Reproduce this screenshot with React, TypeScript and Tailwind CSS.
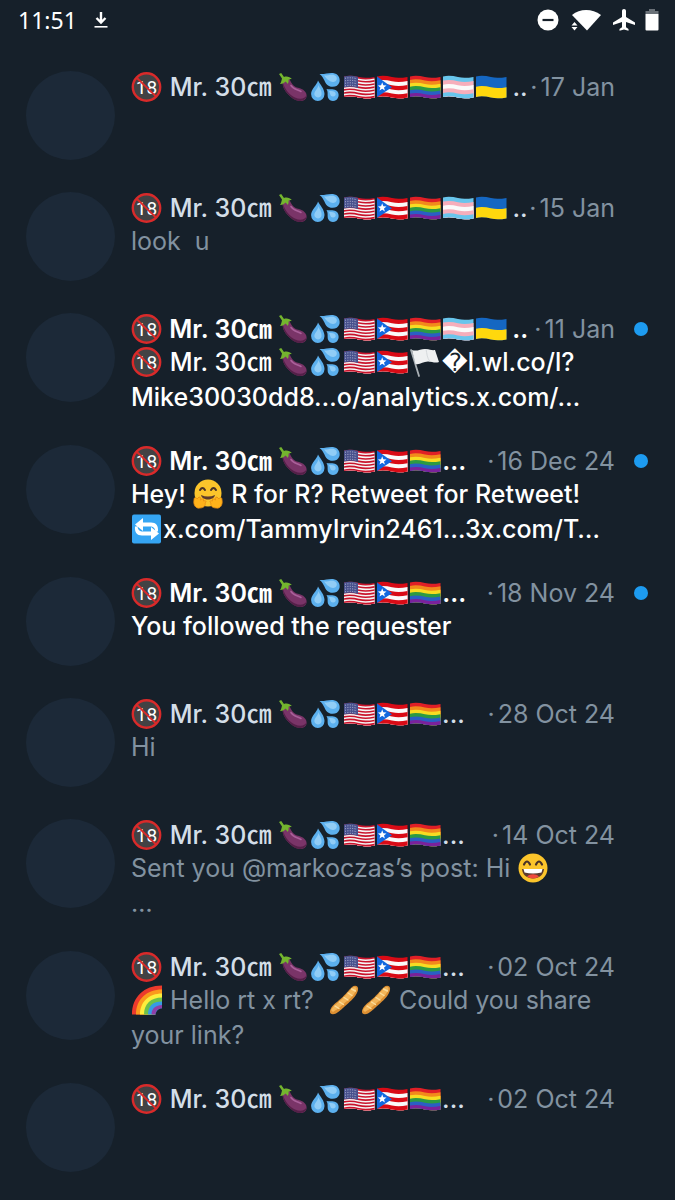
import type { ReactNode } from "react";

type Conversation = {
  name: string;
  date: string;
  lines?: string[];
  unread?: boolean;
};

const LONG_NAME = "🔞 Mr. 30㎝ 🍆💦🇺🇸🇵🇷🏳️‍🌈🏳️‍⚧️🇺🇦\u2009..";
const SHORT_NAME = "🔞 Mr. 30㎝ 🍆💦🇺🇸🇵🇷🏳️‍🌈...";

const conversations: Conversation[] = [
  { name: LONG_NAME, date: "17 Jan" },
  { name: LONG_NAME, date: "15 Jan", lines: ["look  u"] },
  {
    name: LONG_NAME,
    date: "11 Jan",
    unread: true,
    lines: ["🔞 Mr. 30㎝ 🍆💦🇺🇸🇵🇷🏳️�l.wl.co/l?", "Mike30030dd8…o/analytics.x.com/…"],
  },
  {
    name: SHORT_NAME,
    date: "16 Dec 24",
    unread: true,
    lines: ["Hey! 🤗 R for R? Retweet for Retweet!", "🔄x.com/TammyIrvin2461…3x.com/T…"],
  },
  { name: SHORT_NAME, date: "18 Nov 24", unread: true, lines: ["You followed the requester"] },
  { name: SHORT_NAME, date: "28 Oct 24", lines: ["Hi"] },
  { name: SHORT_NAME, date: "14 Oct 24", lines: ["Sent you @markoczas’s post: Hi 😄", "…"] },
  { name: SHORT_NAME, date: "02 Oct 24", lines: ["🌈 Hello rt x rt?  🥖🥖 Could you share", "your link?"] },
  { name: SHORT_NAME, date: "02 Oct 24" },
];

// Top edge of a waving flag band starting at height y
const wave = (y: number) => `M1 ${y} C6 ${y - 1.2} 11 ${y - 0.6} 16 ${y + 0.6} S26 ${y + 1.4} 31.5 ${y + 0.4}`;
// Bottom edge of the flag, drawn back from right to left
const hem = "L31.5 26.4 C26 27.4 21 27.6 16 26.6 C11 25.4 6 24.8 1 26 Z";

function Flag({ colors, children }: { colors: string[]; children?: ReactNode }) {
  const step = 20.5 / colors.length;
  return (
    <>
      {colors.map((color, i) => (
        <path key={i} d={`${wave(5.5 + i * step)} ${hem}`} fill={color} />
      ))}
      {children}
    </>
  );
}

const usStripes = Array.from({ length: 13 }, (_, i) => (i % 2 ? "#f5f5f5" : "#c9132b"));

const emojis: Record<string, ReactNode> = {
  "🔞": (
    <>
      <circle cx="15.500" cy="16" r="14" fill="#424244" />
      <text
        x="15.500"
        y="23"
        textAnchor="middle"
        fill="#fff"
        fontSize="19"
        fontWeight="400"
        fontFamily="Roboto, sans-serif"
      >
        18
      </text>
      <path d="M6 7 25 25.500" stroke="#d92a2a" strokeWidth="1.800" />
      <circle cx="15.500" cy="16" r="13.700" fill="none" stroke="#d92a2a" strokeWidth="2.400" />
    </>
  ),
  "🍆": (
    <>
      <path d="M5 9C3 15 8 22 13 26c5 4.500 14 6 15.500 0 1-5-3.500-8-8.500-9.200C14.500 15.500 13 11 11.500 8Z" fill="#7a3468" />
      <path d="M5 12c2 7 7 12 12 14.500 5 2.300 10 1.500 11.500-2.500-.2 7.500-9.500 7.500-15.500 2C8 21.500 4.500 17 5 12Z" fill="#542048" />
      <path d="M13 14.500c2 3.500 6 4 10 6" stroke="#a9609a" strokeWidth="1.600" strokeLinecap="round" fill="none" />
      <path
        d="M1 3 3.200 2 6 6c3-1 6 0 8 2.200-1.500-.2-2.500 0-3.500.5.300 1.500 0 3-.8 4.300-.8-1.500-1.500-2-2.200-2.500-1 1-2.500 2.500-5.500 2.500C3.500 11 3.500 9 4 7.500Z"
        fill="#74b52e"
      />
    </>
  ),
  "💦": (
    <>
      <path d="M8 9.500c2 4 6.500 8 6.500 13.500a6.700 6.900 0 0 1-13.400 0C1 18 7 14 8 9.500Z" fill="#5cb0ee" />
      <path d="M9.500 3c5 .5 9-1.500 13.500-1 5 .6 7.500 5 6.500 9-1.200 4.500-6.500 6-10.500 4-5-2.500-4-8-9.500-12Z" fill="#5cb0ee" />
      <path d="M16.500 18c4 .5 8-.5 10.500 2 2.600 2.600 2 7-.8 9-3 2-6.800.8-8-2-1.200-3 .3-6-1.700-9Z" fill="#5cb0ee" />
      <path d="M8.500 14c1.500 4 3.500 6 3 9.500-.6 3.500-5.500 4-7 .5C3.500 20.500 8 18 8.500 14Z" fill="#91cdf6" />
      <path d="M14 4.500c4 0 8-1.500 10.500-.3 2.800 1.300 3 4.500 1 6-3.500 2.300-8-1-11.500-5.700Z" fill="#91cdf6" />
      <path d="M19 20c3 .2 5.500 0 6.500 2 .8 2-.5 3.500-2.500 3.500-3 0-2.500-3-4-5.500Z" fill="#91cdf6" />
    </>
  ),
  "🇺🇸": (
    <Flag colors={usStripes}>
      <path d="M1 5.500C6 4.300 11 5 15 6V17C11 16 6 15.300 1 16.500Z" fill="#47508c" />
      <path
        d="M2 7.300q6-1.200 12 .5M2 9.800q6-1.200 12 .5M2 12.300q6-1.200 12 .5M2 14.800q6-1.200 12 .5"
        stroke="#c5c9e2"
        strokeWidth=".9"
        strokeDasharray="1 1.400"
        fill="none"
      />
    </Flag>
  ),
  "🇵🇷": (
    <Flag colors={["#d90b16", "#fafafa", "#d90b16", "#fafafa", "#d90b16"]}>
      <path d="M1 5.500 16 16.200 1 26Z" fill="#1268df" />
      <path d="m6.200 11.300 1.100 3 3.200.1-2.500 2 .9 3.100-2.700-1.800-2.700 1.800.9-3.100-2.500-2 3.200-.1Z" fill="#fff" />
    </Flag>
  ),
  "🏳️‍🌈": <Flag colors={["#e01f26", "#f28a1c", "#f7dc22", "#2c9a43", "#2a5fc4", "#7b219b"]} />,
  "🏳️‍⚧️": <Flag colors={["#68c5ec", "#f6aebb", "#fafafa", "#f6aebb", "#68c5ec"]} />,
  "🇺🇦": <Flag colors={["#1567c2", "#ffd80d"]} />,
  "🏳️": (
    <>
      <path d="M2 4 10 30" stroke="#a9b0b5" strokeWidth="1.800" strokeLinecap="round" />
      <path d="M3 4c5 2 9-1.500 14-1 4 .5 6 1.500 9 1L30 16c-4 1.500-7-.5-11-.5-5 0-8 3.500-12.500 2.500Z" fill="#eef0f1" />
      <path d="M17 3c1 5 1 9 4 12.500" stroke="#d5d9dc" strokeWidth="1" fill="none" />
    </>
  ),
  "🤗": (
    <>
      <circle cx="16" cy="15" r="13.500" fill="#fcc52b" />
      <path d="M8 12q2.500-4 5 0M19 12q2.500-4 5 0" stroke="#4a3228" strokeWidth="2" strokeLinecap="round" fill="none" />
      <path d="M9 17q7 3 14 0c-1 6-13 6-14 0Z" fill="#5d3b2d" />
      <path
        d="M2 22c0-3 2-3 3-1l2-2c2 0 2 2 1.500 3 2-2 4-1 3 1 3-1 3 1 1.500 2 1 2-1 5-5 5-4 1-7-3-6-8Z"
        fill="#ffb21a"
        stroke="#e58a13"
        strokeWidth=".8"
      />
      <path
        d="M30 22c0-3-2-3-3-1l-2-2c-2 0-2 2-1.500 3-2-2-4-1-3 1-3-1-3 1-1.500 2-1 2 1 5 5 5 4 1 7-3 6-8Z"
        fill="#ffb21a"
        stroke="#e58a13"
        strokeWidth=".8"
      />
    </>
  ),
  "🔄": (
    <>
      <rect x="1" y="1.500" width="29" height="29" rx="2" fill="#35a5f3" />
      <path
        d="M27 18.500c.5-6-2-9-7-9h-8V5L4 11.500l8 6.500v-4.500h7c3.500 0 5 1.500 5.500 5ZM4 13.500c-.5 6 2 9 7 9h9V27l8-6.500-8-6.500v4.500h-8c-3.500 0-5-1.500-5.500-5Z"
        fill="#fff"
      />
    </>
  ),
  "😄": (
    <>
      <circle cx="16" cy="16" r="14.500" fill="#fcc52b" />
      <path
        d="M7 12.500q3-6 6 0M19 12.500q3-6 6 0"
        stroke="#4a3228"
        strokeWidth="2.200"
        strokeLinecap="round"
        fill="none"
      />
      <path d="M5 17h22c-.5 6-5 9.500-11 9.500S5.500 23 5 17Z" fill="#5d3b2d" />
      <path d="M6.500 17h19l-1 3.500q-8.500 2-17 0Z" fill="#fff" />
      <path d="M10 24.500c3-3 9-3 12 0-3.500 2.600-8.500 2.600-12 0Z" fill="#ef4a3c" />
    </>
  ),
  "🌈": (
    <>
      <path d="M1 30.500C1 13 13 1.500 31 1.500v24.500c-3 0-4 1.500-4.500 4.500Z" fill="#ec3a2c" />
      <path d="M5 30.500C5 15 16 5.500 31 5.500v20.500c-3 0-4 1.500-4.500 4.500Z" fill="#fb9a1c" />
      <path d="M9 30.500C9 18 18 9.500 31 9.500v16.500c-3 0-4 1.500-4.500 4.500Z" fill="#fdee3c" />
      <path d="M13 30.500C13 20 20 13.500 31 13.500v12.500c-3 0-4 1.500-4.500 4.500Z" fill="#6cc04a" />
      <path d="M17 30.500C17 22 22 17.500 31 17.500v8.500c-3 0-4 1.500-4.500 4.500Z" fill="#369be6" />
      <path d="M20.500 30.500C20.500 24.500 25 21 31 21v3.500c-4 0-6 2-6.500 6Z" fill="#8f3fa8" />
      <path d="M24.500 31C25 27 27 24.500 31.500 24.500V31Z" fill="#16202a" />
    </>
  ),
  "🥖": (
    <>
      <path d="M2 27c1-5 6-8 11-12.500S20 7 24 3c3-2.500 7-1 6 3-1 5-5 9-10 13.500S12 27 8 29.500c-3 1.500-6.500 1-6-2.500Z" fill="#dc8f32" />
      <path d="M3 26c3-5 7-7 12-12s7-8 10-10.500c2-1 4-.5 3.500 2C26 12 20 16 15 20.500S8 26 5 28Z" fill="#f3b65a" />
      <path
        d="m7 22 4 2.500M11.500 18l4 2.500M16 13.500l4 2.500M20 9l4 2.500M23.500 5l4 2"
        stroke="#fbdc9b"
        strokeWidth="1.400"
        strokeLinecap="round"
      />
    </>
  ),
};

// These glyphs are a touch wider than the rest
const wideEmojis = ["💦", "🇺🇸", "🇵🇷", "🏳️‍🌈", "🏳️‍⚧️", "🇺🇦", "🏳️"];

// Longer sequences go first so that joined flags win over the plain white one
const emojiPattern = new RegExp(
  `(${Object.keys(emojis)
    .sort((a, b) => b.length - a.length)
    .join("|")})`,
);

function RichText({ text }: { text: string }) {
  return (
    <>
      {text.split(emojiPattern).map((part, i) =>
        emojis[part] ? (
          <svg
            key={i}
            viewBox="0 0 32 32"
            role="img"
            aria-label={part}
            className={wideEmojis.includes(part) ? "mr-px size-8 shrink-0" : "size-8 shrink-0"}
          >
            {emojis[part]}
          </svg>
        ) : (
          part && <span key={i}>{part}</span>
        ),
      )}
    </>
  );
}

function StatusBar() {
  return (
    <header className="flex h-10 items-center pr-4 pl-[18px] text-white">
      <span className="font-['Noto_Sans',sans-serif] text-[23px] leading-10">11:51</span>
      <svg viewBox="0 0 16 18" className="ml-4 h-[18px] w-4" fill="none" stroke="currentColor">
        <path d="M8 1v10M3.500 7 8 11.500 12.500 7" strokeWidth="2.400" />
        <path d="M1.500 15.800h13" strokeWidth="1.600" />
      </svg>
      <div className="ml-auto flex items-center">
        <svg viewBox="0 0 22 22" className="size-[22px]">
          <circle cx="11" cy="11" r="10.500" fill="#fff" />
          <path d="M5.500 11h11" stroke="#16202a" strokeWidth="2.200" />
        </svg>
        <svg viewBox="0 0 30 22" className="ml-3 h-[22px] w-[30px]" fill="#fff">
          <path d="M1 6C9-.8 21-.8 30 6L16 21.500Z" />
          <path d="M0 12h7v10H0Z" fill="#16202a" />
          <path d="M3.500 13 6.500 16.500h-6ZM3.500 21.500l3-3.500h-6Z" />
        </svg>
        <svg viewBox="0 0 22 22" className="ml-3 size-[22px]" fill="#fff">
          <path d="M11 0c1.200 0 2 .9 2 2v6l9 5.500v2.400l-9-2.800v5.100l2.500 1.800v1.700L11 20.600l-4.500 1.100V20L9 18.200v-5.100l-9 2.800v-2.400L9 8V2c0-1.100.8-2 2-2Z" />
        </svg>
        <svg viewBox="0 0 14 22" className="ml-[10px] h-[22px] w-[14px]">
          <path d="M.5 5V2H4V0h6v2h3.500v3Z" fill="#6a7178" />
          <path d="M.5 5h13v15.500q0 1-1 1h-11q-1 0-1-1Z" fill="#fff" />
        </svg>
      </div>
    </header>
  );
}

function ConversationRow({ name, date, lines = [], unread }: Conversation) {
  return (
    <li>
      <a href="#" className="flex min-h-[121px] gap-4 pt-4 pr-[27px] pb-[15px] pl-[26px]">
        <div className="size-[89px] shrink-0 rounded-full bg-[#1c2938]" />
        <div className="min-w-0 flex-1">
          <div className="flex h-[31px] items-center whitespace-pre">
            <div
              className={`flex items-center ${unread ? "font-semibold text-white" : "font-medium text-[#d3dee8]"}`}
            >
              <RichText text={name} />
            </div>
            <div className="ml-auto flex gap-[3px] text-[#8292a0]">
              <span>·</span>
              <span>{date}</span>
            </div>
          </div>
          {lines.map((line) => (
            <p
              key={line}
              className={`flex h-[35px] items-center whitespace-pre ${
                unread ? "font-medium text-white" : "text-[#8292a0]"
              }`}
            >
              <RichText text={line} />
            </p>
          ))}
        </div>
        <div className="flex h-8 w-[17px] shrink-0 items-center justify-end">
          {unread && <span className="size-[14px] rounded-full bg-[#1d9bf0]" />}
        </div>
      </a>
    </li>
  );
}

export default function App() {
  return (
    <div className="min-h-screen overflow-hidden bg-[#16202a] font-[Inter,'Noto_Sans_CJK_JP','DejaVu_Sans',sans-serif] text-[25px] leading-8">
      <StatusBar />
      <ul className="pt-[15px]">
        {conversations.map((conversation, i) => (
          <ConversationRow key={i} {...conversation} />
        ))}
      </ul>
    </div>
  );
}
